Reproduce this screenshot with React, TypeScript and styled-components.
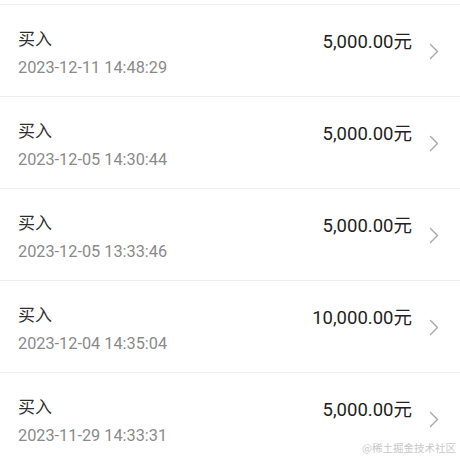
import React from "react";
import styled, { createGlobalStyle } from "styled-components";

const GlobalStyle = createGlobalStyle`
  html, body {
    margin: 0;
    padding: 0;
    background: #ffffff;
  }
  body {
    font-family: Roboto, "Noto Sans CJK SC", sans-serif;
    -webkit-font-smoothing: antialiased;
  }
`;

const Page = styled.div`
  position: relative;
  width: 460px;
  height: 460px;
  overflow: hidden;
  background: #ffffff;
  padding-top: 4px;
  box-sizing: border-box;
`;

const List = styled.ul`
  list-style: none;
  margin: 0;
  padding: 0;
`;

const Row = styled.li`
  display: grid;
  grid-template-columns: 1fr auto auto;
  column-gap: 17px;
  height: 92px;
  box-sizing: border-box;
  border-top: 1px solid #efefef;
  padding: 0 21px 0 18px;
`;

const Left = styled.div`
  display: flex;
  flex-direction: column;
  padding-top: 21px;
`;

const Label = styled.div`
  font-family: "Noto Sans CJK SC", sans-serif;
  font-size: 17px;
  line-height: 24px;
  color: #2f2f2f;
`;

const Time = styled.div`
  margin-top: 7px;
  font-family: Roboto, "Noto Sans CJK SC", sans-serif;
  font-size: 16.3px;
  line-height: 22px;
  color: #8a8a8a;
`;

const Amount = styled.div`
  padding-top: 24px;
  font-family: Roboto, "Noto Sans CJK SC", sans-serif;
  font-size: 18.5px;
  line-height: 26px;
  color: #222222;
`;

const Chevron = styled.svg`
  align-self: center;
  width: 10px;
  height: 17px;
  margin-top: 1px;
`;

const Watermark = styled.div`
  position: absolute;
  right: 4px;
  bottom: 5px;
  font-family: "Noto Sans CJK SC", sans-serif;
  font-size: 10.5px;
  line-height: 14px;
  color: #c8c8c8;
`;

const records = [
  { time: "2023-12-11 14:48:29", amount: "5,000.00" },
  { time: "2023-12-05 14:30:44", amount: "5,000.00" },
  { time: "2023-12-05 13:33:46", amount: "5,000.00" },
  { time: "2023-12-04 14:35:04", amount: "10,000.00" },
  { time: "2023-11-29 14:33:31", amount: "5,000.00" },
];

export default function App() {
  return (
    <>
      <GlobalStyle />
      <Page>
        <List>
          {records.map((r, i) => (
            <Row key={i}>
              <Left>
                <Label>买入</Label>
                <Time>{r.time}</Time>
              </Left>
              <Amount>{r.amount}元</Amount>
              <Chevron viewBox="0 0 10 17" fill="none">
                <path d="M1.5 1.5 L8.5 8.5 L1.5 15.5" stroke="#a8a8a8" strokeWidth="1.4" strokeLinecap="round" strokeLinejoin="round" />
              </Chevron>
            </Row>
          ))}
        </List>
        <Watermark>@稀土掘金技术社区</Watermark>
      </Page>
    </>
  );
}
